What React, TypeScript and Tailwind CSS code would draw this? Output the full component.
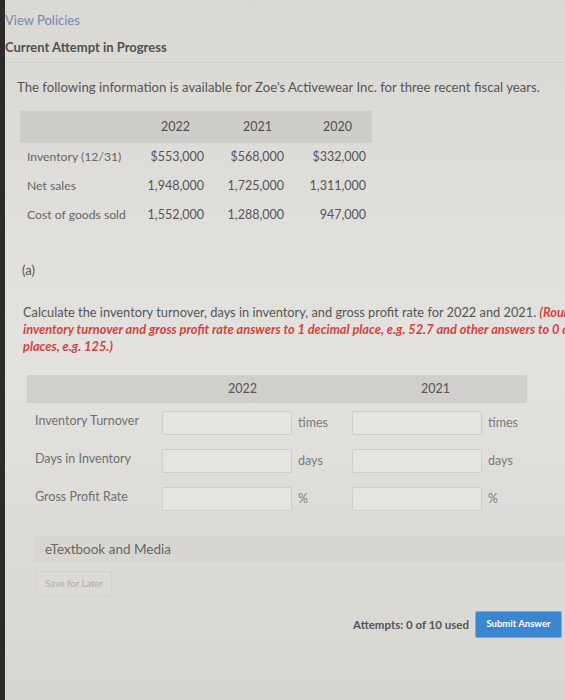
const rows = [
  { label: "Inventory (12/31)", values: ["$553,000", "$568,000", "$332,000"] },
  { label: "Net sales", values: ["1,948,000", "1,725,000", "1,311,000"] },
  { label: "Cost of goods sold", values: ["1,552,000", "1,288,000", "947,000"] },
];

const answers = [
  { label: "Inventory Turnover", unit: "times" },
  { label: "Days in Inventory", unit: "days" },
  { label: "Gross Profit Rate", unit: "%" },
];

function AnswerCell({ unit }: { unit: string }) {
  return (
    <div className="flex items-center gap-[6px]">
      <input
        className="h-[24px] w-[130px] rounded-[2px] border border-[#cfcdc9] bg-[#e5e4e1] outline-none"
        aria-label={unit}
      />
      <span className="text-[12.5px] text-[#7a7a7a]">{unit}</span>
    </div>
  );
}

export default function App() {
  return (
    <div className="flex min-h-[700px] w-[565px] overflow-hidden bg-linear-to-b from-[#dad8d3] via-[#e3e2df] to-[#d8d6d1] font-['Lato','Noto_Sans',sans-serif]">
      <div className="w-[5px] shrink-0 bg-[#2c2b2a]" />
      <div className="flex min-w-0 flex-1 flex-col pt-[12px]">
        <div className="text-[13px] leading-[16px] text-[#7485b3]">View Policies</div>
        <div className="mt-[11px] border-b border-[#d2d0cc] pb-[7px] text-[13px] font-bold leading-[16px] text-[#505050]">
          Current Attempt in Progress
        </div>

        <p className="ml-[12px] mt-[15px] whitespace-nowrap text-[13.2px] leading-[18px] text-[#555]">
          The following information is available for Zoe's Activewear Inc. for three recent fiscal years.
        </p>

        <div className="ml-[15px] mt-[15px] w-[352px] text-[12.5px]">
          <div className="grid h-[32px] grid-cols-[122px_66px_80px_82px] items-center bg-[#cfcdc9] text-[#4f4f4f]">
            <div />
            <div className="pr-[18px] text-right">2022</div>
            <div className="pr-[16px] text-right">2021</div>
            <div className="pr-[18px] text-right">2020</div>
          </div>
          {rows.map((r) => (
            <div key={r.label} className="grid h-[29px] grid-cols-[122px_66px_80px_82px] items-center text-[#555]">
              <div className="pl-[7px] text-[12.2px] text-[#666]">{r.label}</div>
              {r.values.map((v, i) => (
                <div key={i} className="pr-[4px] text-right">
                  {v}
                </div>
              ))}
            </div>
          ))}
        </div>

        <div className="ml-[17px] mt-[32px] text-[13px] leading-[16px] text-[#555]">(a)</div>

        <div className="ml-[18px] mt-[26px] whitespace-nowrap text-[12.8px] leading-[17px] text-[#555]">
          <div>
            Calculate the inventory turnover, days in inventory, and gross profit rate for 2022 and 2021.{" "}
            <span className="font-bold italic text-[#d4423d]">(Round</span>
          </div>
          <div className="font-bold italic text-[#d4423d]">
            inventory turnover and gross profit rate answers to 1 decimal place, e.g. 52.7 and other answers to 0 decimal
          </div>
          <div className="font-bold italic text-[#d4423d]">places, e.g. 125.)</div>
        </div>

        <div className="ml-[22px] mt-[20px] w-[500px]">
          <div className="grid h-[28px] grid-cols-[135px_190px_175px] items-center bg-[#d1cfcb] text-[12.5px] text-[#555]">
            <div />
            <div className="pl-[66px]">2022</div>
            <div className="pl-[69px]">2021</div>
          </div>
          <div className="mt-[1px]">
            {answers.map((a) => (
              <div key={a.label} className="grid h-[38px] grid-cols-[135px_190px_175px] items-center">
                <div className="-mt-[4px] pl-[8px] text-[12.5px] text-[#6f6f6f]">{a.label}</div>
                <AnswerCell unit={a.unit} />
                <AnswerCell unit={a.unit} />
              </div>
            ))}
          </div>
        </div>

        <div className="ml-[28px] mt-[18px] flex h-[26px] items-center bg-[#d8d6d2] pl-[12px] text-[13.5px] text-[#666]">
          eTextbook and Media
        </div>

        <div className="ml-[31px] mt-[9px] flex h-[26px] w-[76px] items-center justify-center border border-[#d3d1cd] text-[9.5px] text-[#ababab]">
          Save for Later
        </div>

        <div className="mt-[14px] flex items-center justify-end gap-[6px] pr-[3px]">
          <span className="text-[11.5px] font-bold text-[#555]">Attempts: 0 of 10 used</span>
          <button className="h-[27px] w-[87px] rounded-[2px] border border-[#77ade0] bg-[#3a86d1] text-[9.5px] font-bold text-white">
            Submit Answer
          </button>
        </div>
      </div>
    </div>
  );
}
